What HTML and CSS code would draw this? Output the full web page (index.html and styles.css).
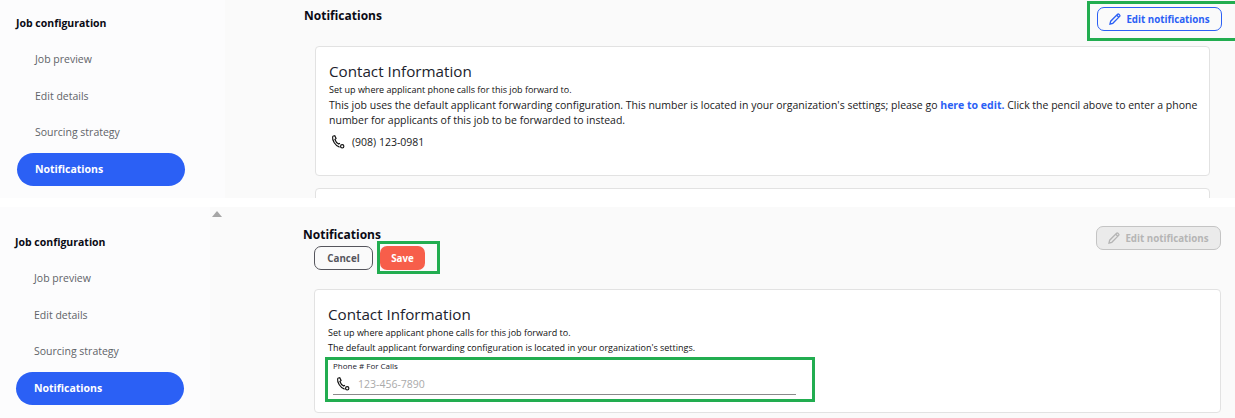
FILE: index.html
```html
<!DOCTYPE html>
<html lang="en">
<head>
<meta charset="utf-8">
<title>Notifications</title>
<link rel="stylesheet" href="styles.css">
</head>
<body>
<section class="panel panel-top">
  <nav class="side side-top">
    <h2 class="side-title">Job configuration</h2>
    <a class="side-link">Job preview</a>
    <a class="side-link">Edit details</a>
    <a class="side-link">Sourcing strategy</a>
    <a class="side-link active">Notifications</a>
  </nav>
  <main class="main main-top">
    <div class="head">
      <h1 class="title">Notifications</h1>
      <button class="edit edit-on">
        <svg class="pencil" viewBox="0 0 12 12"><path d="M1 11l.7-2.8L8.6 1.300a.9.9 0 0 1 1.300 0l.8.8a.9.9 0 0 1 0 1.300L3.800 10.300z" fill="none" stroke="currentColor" stroke-width="1.300"/><path d="M7.800 2.200l2 2" stroke="currentColor" stroke-width="1.300"/></svg>
        Edit notifications
      </button>
    </div>
    <article class="card card-a">
      <h3 class="card-title">Contact Information</h3>
      <p class="small">Set up where applicant phone calls for this job forward to.</p>
      <p class="body">This job uses the default applicant forwarding configuration. This number is located in your organization's settings; please go <a class="link">here to edit.</a> Click the pencil above to enter a phone number for applicants of this job to be forwarded to instead.</p>
      <div class="phone-row">
        <svg class="phone" viewBox="0 0 16 16"><path d="M2 1.500l2.300-.6 1.500 3-1.300 1.200c.7 2.200 2.200 4.100 4.300 5.300l1.400-.9M1.800 1.600c-.6 4.500 3 10.800 8 12.300" fill="none" stroke="#111" stroke-width="1.300"/><circle cx="12.800" cy="12.900" r="1.900" fill="none" stroke="#111" stroke-width="1.300"/></svg>
        <span>(908) 123-0981</span>
      </div>
    </article>
    <div class="card card-next"></div>
  </main>
  <div class="mark mark-edit"></div>
</section>

<section class="panel panel-bottom">
  <nav class="side side-bottom">
    <h2 class="side-title">Job configuration</h2>
    <a class="side-link">Job preview</a>
    <a class="side-link">Edit details</a>
    <a class="side-link">Sourcing strategy</a>
    <a class="side-link active">Notifications</a>
  </nav>
  <span class="caret"></span>
  <main class="main main-bottom">
    <div class="head">
      <div>
        <h1 class="title">Notifications</h1>
        <div class="actions">
          <button class="cancel">Cancel</button>
          <button class="save">Save</button>
        </div>
      </div>
      <button class="edit edit-off">
        <svg class="pencil" viewBox="0 0 12 12"><path d="M1 11l.7-2.8L8.6 1.300a.9.9 0 0 1 1.300 0l.8.8a.9.9 0 0 1 0 1.300L3.800 10.300z" fill="none" stroke="currentColor" stroke-width="1.300"/><path d="M7.800 2.200l2 2" stroke="currentColor" stroke-width="1.300"/></svg>
        Edit notifications
      </button>
    </div>
    <article class="card card-b">
      <h3 class="card-title">Contact Information</h3>
      <p class="small">Set up where applicant phone calls for this job forward to.</p>
      <p class="small second">The default applicant forwarding configuration is located in your organization's settings.</p>
      <div class="field">
        <span class="field-label">Phone # For Calls</span>
        <div class="field-row">
          <svg class="phone" viewBox="0 0 16 16"><path d="M2 1.500l2.300-.6 1.500 3-1.300 1.200c.7 2.200 2.200 4.100 4.300 5.300l1.400-.9M1.800 1.600c-.6 4.500 3 10.800 8 12.300" fill="none" stroke="#111" stroke-width="1.300"/><circle cx="12.800" cy="12.900" r="1.900" fill="none" stroke="#111" stroke-width="1.300"/></svg>
          <span class="placeholder">123-456-7890</span>
        </div>
      </div>
    </article>
  </main>
  <div class="mark mark-save"></div>
  <div class="mark mark-phone"></div>
</section>
</body>
</html>
```

FILE: styles.css
```css
* { box-sizing: border-box; }
html, body { margin: 0; padding: 0; }
body {
  width: 1235px;
  height: 418px;
  overflow: hidden;
  background: #fff;
  font-family: "Open Sans", "Noto Sans", sans-serif;
  color: #1a1a22;
}
h1, h2, h3, p { margin: 0; }
button { font-family: inherit; }

.panel { position: relative; display: flex; background: #fafafa; overflow: hidden; }
.panel-top { height: 198px; }
.panel-bottom { height: 211px; margin-top: 9px; }

.side { flex: none; display: flex; flex-direction: column; background: #fcfcfd; }
.side-top { width: 225px; padding: 15px 0 0 17px; }
.side-bottom { width: 210px; padding: 27px 0 0 16px; }
.side-title { font-size: 10.500px; font-weight: 700; line-height: 16px; color: #0a0a14; margin: 0 0 12px -1px; height: 16px; }
.side-link {
  display: flex;
  align-items: center;
  width: 168px;
  height: 32px;
  margin-bottom: 4.500px;
  padding-left: 18px;
  font-size: 10.500px;
  color: #5f6368;
  border-radius: 17px;
}
.side-link.active { height: 33px; background: #2b60f5; color: #fff; font-weight: 700; }

.main { flex: 1; min-width: 0; }
.main-top { padding: 8px 25px 0 79px; }
.main-bottom { padding: 20px 14px 0 93px; }
.head { display: flex; justify-content: space-between; align-items: flex-start; }
.title { font-size: 12px; font-weight: 700; line-height: 15px; color: #0a0a14; }

.edit {
  display: flex;
  align-items: center;
  justify-content: center;
  gap: 5px;
  width: 125px;
  height: 24px;
  padding: 0;
  border-radius: 7px;
  font-size: 9.750px;
  font-weight: 700;
}
.edit-on { margin-top: -1px; margin-right: -12px; background: #fafafa; border: 1px solid #2b60f5; color: #2b60f5; }
.edit-off { margin-top: -1px; background: #ebebeb; border: 1px solid #c4c4c4; color: #b5b5b5; }
.pencil { width: 12px; height: 12px; }

.actions { display: flex; gap: 7px; margin: 4px 0 0 11px; }
.cancel, .save {
  height: 24px;
  padding: 0;
  border-radius: 7px;
  font-size: 9.750px;
  font-weight: 700;
}
.cancel { width: 59px; background: #fafafa; border: 1px solid #55555c; color: #55555c; }
.save { width: 45px; background: #f75e4a; border: 0; color: #fff; }

.card { background: #fff; border: 1px solid #e2e2e2; border-radius: 4px; }
.card-a { height: 130px; margin: 15px 0 0 11px; padding: 14px 8px 0 13px; }
.card-next { height: 40px; margin: 12px 0 0 11px; }
.card-b { height: 124px; margin: 19px 0 0 11px; padding: 14px 12px 0 13px; }
.card-title { font-size: 15.200px; font-weight: 400; line-height: 20px; color: #20222c; }
.small { font-size: 9px; line-height: 13px; margin-top: 2px; color: #111; }
.card-b .small { margin-top: 2px; line-height: 13px; }
.card-b .second { margin-top: 2px; }
.body { font-size: 10.500px; line-height: 15px; color: #1a1a22; margin-top: 2px; }
.link { color: #2b60f5; font-weight: 700; }

.phone-row { display: flex; align-items: center; gap: 7px; margin-top: 7px; font-size: 10.500px; padding-left: 2px; }
.phone { width: 14px; height: 14px; flex: none; }

.field { width: 463px; margin: 6px 0 0 5px; }
.field-label { display: block; font-size: 8px; line-height: 11px; color: #20222c; }
.field-row { display: flex; align-items: center; gap: 8px; height: 24px; padding: 3px 0 0 3px; border-bottom: 1px solid #8a8a8a; }
.placeholder { font-size: 10.500px; color: #aaa; }

.caret {
  position: absolute;
  left: 212px;
  top: 4px;
  border-left: 5px solid transparent;
  border-right: 5px solid transparent;
  border-bottom: 6px solid #a6a6a6;
}

.mark { position: absolute; border: 3px solid #22ad50; pointer-events: none; }
.mark-edit { left: 1087px; top: 1px; width: 148px; height: 40px; border-right: 0; }
.mark-save { left: 377px; top: 34px; width: 63px; height: 33px; }
.mark-phone { left: 325px; top: 150px; width: 490px; height: 45px; }
```
